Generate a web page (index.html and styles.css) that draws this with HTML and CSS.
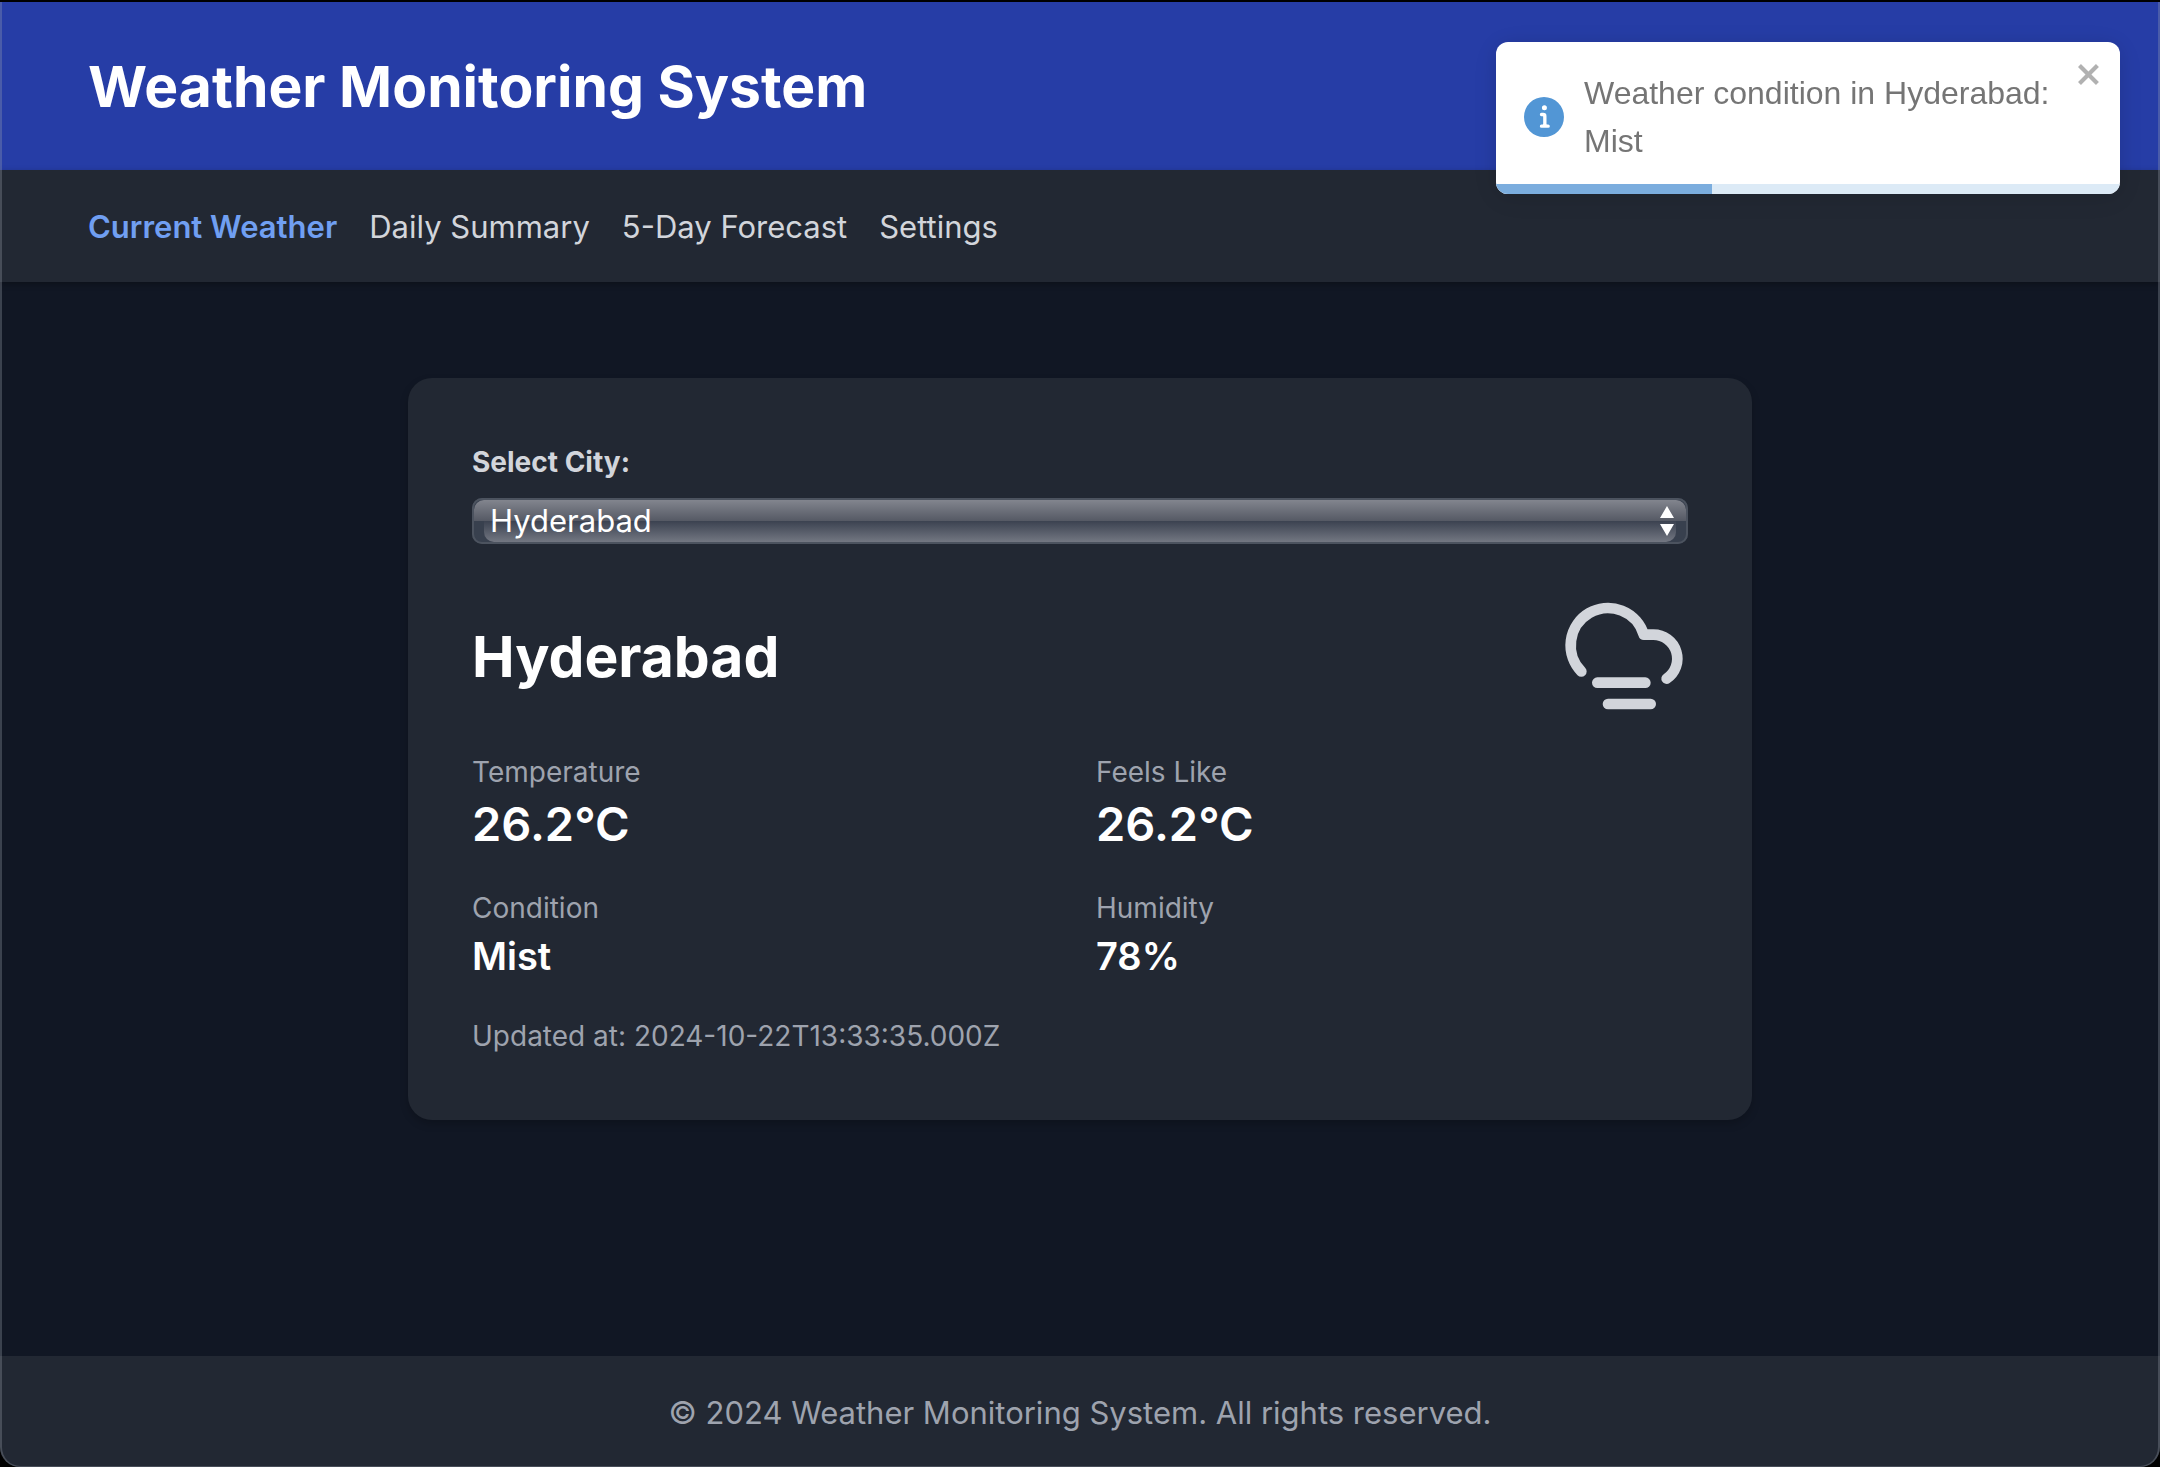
FILE: index.html
```html
<!DOCTYPE html>
<html lang="en">
<head>
<meta charset="utf-8">
<meta name="viewport" content="width=device-width, initial-scale=1">
<title>Weather Monitoring System</title>
<link rel="stylesheet" href="styles.css">
</head>
<body>
<div class="app">
  <header class="header">
    <h1 class="header-title">Weather Monitoring System</h1>
  </header>
  <nav class="nav">
    <a class="nav-link nav-link-active" href="#current">Current Weather</a>
    <a class="nav-link" href="#daily">Daily Summary</a>
    <a class="nav-link" href="#forecast">5-Day Forecast</a>
    <a class="nav-link" href="#settings">Settings</a>
  </nav>
  <main class="main">
    <section class="card">
      <label class="field-label" for="city">Select City:</label>
      <div class="select-wrap">
        <select class="select" id="city">
          <option>Hyderabad</option>
        </select>
        <svg class="select-arrows" viewBox="0 0 14 30" aria-hidden="true"><path d="M7 0l7 12H0zM0 18h14L7 30z"/></svg>
      </div>
      <div class="city">
        <h2 class="city-name">Hyderabad</h2>
        <svg class="city-icon" viewBox="0 0 24 24" aria-hidden="true">
          <path d="M4 14.899A7 7 0 1 1 15.71 8h1.79a4.5 4.5 0 0 1 2.5 8.242"/>
          <path d="M16 17H7"/>
          <path d="M17 21H9"/>
        </svg>
      </div>
      <div class="stats">
        <div>
          <p class="stat-label">Temperature</p>
          <p class="stat-value stat-value-large">26.2°C</p>
        </div>
        <div>
          <p class="stat-label">Feels Like</p>
          <p class="stat-value stat-value-large">26.2°C</p>
        </div>
        <div>
          <p class="stat-label">Condition</p>
          <p class="stat-value">Mist</p>
        </div>
        <div>
          <p class="stat-label">Humidity</p>
          <p class="stat-value">78%</p>
        </div>
      </div>
      <p class="updated">Updated at: 2024-10-22T13:33:35.000Z</p>
    </section>
  </main>
  <footer class="footer">© 2024 Weather Monitoring System. All rights reserved.</footer>
</div>
<div class="toast" role="alert">
  <div class="toast-body">
    <svg class="toast-icon" viewBox="0 0 24 24" aria-hidden="true"><path d="M12 0a12 12 0 1012 12A12.013 12.013 0 0012 0zm.25 5a1.5 1.5 0 11-1.5 1.5 1.5 1.5 0 011.5-1.5zm2.25 13.5h-4a1 1 0 010-2h.75a.25.25 0 00.25-.25v-4.5a.25.25 0 00-.25-.25h-.75a1 1 0 010-2h1a2 2 0 012 2v4.75a.25.25 0 00.25.25h.75a1 1 0 110 2z"/></svg>
    <div class="toast-text">Weather condition in Hyderabad: Mist</div>
  </div>
  <button class="toast-close" type="button" aria-label="close">
    <svg class="toast-close-icon" viewBox="0 0 14 16" aria-hidden="true"><path fill-rule="evenodd" d="M7.71 8.23l3.75 3.75-1.48 1.48-3.75-3.75-3.75 3.75L1 11.98l3.75-3.75L1 4.48 2.48 3l3.75 3.75L9.98 3l1.48 1.48-3.75 3.75z"/></svg>
  </button>
  <div class="toast-track"><div class="toast-progress" style="width: 34.6%"></div></div>
</div>
</body>
</html>
```
FILE: styles.css
```css
*, *::before, *::after { box-sizing: border-box; }

body, h1, h2, p { margin: 0; }

body {
  background: #111724;
  color: #fff;
  font-family: Inter, "Liberation Sans", sans-serif;
  font-size: 31px;
  line-height: 48px;
}

/* Window edge: thin light outline with rounded bottom corners */
body::after {
  content: "";
  position: fixed;
  inset: 2px 0 0;
  border: 2px solid rgba(160, 165, 175, 0.3);
  border-top: 0;
  border-bottom-width: 1px;
  border-radius: 0 0 20px 20px;
  box-shadow: 0 0 0 20px #000;
  pointer-events: none;
}

.app {
  display: flex;
  flex-direction: column;
  min-height: 100vh;
  padding-top: 2px;
}

.header {
  padding: 49px 88px 47px;
  background: #263da6;
}

.header-title {
  font-size: 57px;
  font-weight: 700;
  line-height: 72px;
}

.nav {
  display: flex;
  gap: 32px;
  padding: 33px 88px 31px;
  background: #222833;
  box-shadow: 0 2px 6px rgba(0, 0, 0, 0.3);
}

.nav-link {
  color: #d2d5db;
  text-decoration: none;
}

.nav-link-active {
  color: #709ff2;
  font-weight: 600;
}

.main {
  flex: 1;
  padding: 96px 32px;
}

.card {
  max-width: 1344px;
  margin: 0 auto;
  padding: 64px;
  border-radius: 24px;
  background: #222833;
  box-shadow: 0 4px 8px rgba(0, 0, 0, 0.2);
}

.field-label {
  display: block;
  margin-bottom: 16px;
  color: #d2d5db;
  font-size: 28px;
  font-weight: 700;
  line-height: 40px;
}

.select-wrap {
  position: relative;
  isolation: isolate;
  margin-bottom: 48px;
  border-radius: 10px;
  background: #38404e;
}

/* Glossy halves behind the transparent select */
.select-wrap::before,
.select-wrap::after {
  content: "";
  position: absolute;
  z-index: -1;
  height: 21px;
}

.select-wrap::before {
  top: 2px;
  right: 2px;
  left: 2px;
  border-radius: 10px 10px 0 0;
  background: linear-gradient(#82858e, #555964);
}

.select-wrap::after {
  right: 12px;
  bottom: 2px;
  left: 12px;
  border-radius: 0 0 10px 10px;
  background: linear-gradient(#3b4250, #737782);
}

.select {
  display: block;
  width: 100%;
  height: 46px;
  padding: 0 48px 0 16px;
  border: 2px solid #4c535f;
  border-radius: 10px;
  appearance: none;
  background: transparent;
  color: #fff;
  font: inherit;
  line-height: 42px;
}

.select-arrows {
  position: absolute;
  top: 8px;
  right: 14px;
  width: 14px;
  height: 30px;
  fill: #fff;
  pointer-events: none;
}

.city {
  display: flex;
  align-items: center;
  justify-content: space-between;
  margin-bottom: 32px;
}

.city-name {
  padding-top: 2px;
  font-size: 57px;
  font-weight: 700;
  line-height: 72px;
}

.city-icon {
  width: 128px;
  height: 128px;
  fill: none;
  stroke: #d2d5db;
  stroke-width: 2;
  stroke-linecap: round;
  stroke-linejoin: round;
}

.stats {
  display: grid;
  grid-template-columns: 1fr 1fr;
  gap: 32px;
  margin-bottom: 32px;
}

.stat-label, .updated {
  color: #9ea3ae;
  font-size: 28px;
  line-height: 40px;
}

.stat-value {
  font-size: 38px;
  font-weight: 600;
  line-height: 56px;
}

.stat-value-large {
  font-size: 47px;
  line-height: 64px;
}

.footer {
  padding: 33px 32px 30px;
  background: #222833;
  color: #9ea3ae;
  text-align: center;
}

.toast {
  position: fixed;
  top: 42px;
  right: 40px;
  display: flex;
  align-items: flex-start;
  width: 624px;
  padding: 16px;
  border-radius: 12px;
  overflow: hidden;
  background: #fff;
  box-shadow: 0 2px 20px rgba(0, 0, 0, 0.1), 0 4px 30px rgba(0, 0, 0, 0.05);
  color: #757575;
  font-family: "Liberation Sans", Arial, sans-serif;
  font-size: 32px;
}

.toast-body {
  flex: 1;
  display: flex;
  align-items: center;
  gap: 20px;
  padding: 11px 12px 13px;
}

.toast-icon {
  flex: none;
  width: 40px;
  height: 40px;
  fill: #5296d5;
}

.toast-text { flex: 1; }

.toast-close {
  padding: 0;
  border: 0;
  background: transparent;
  cursor: pointer;
  opacity: 0.3;
}

.toast-close-icon {
  display: block;
  width: 28px;
  height: 32px;
}

.toast-track {
  position: absolute;
  right: 0;
  bottom: 0;
  left: 0;
  height: 10px;
  background: #dceaf6;
}

.toast-progress {
  height: 100%;
  background: #7badde;
}
```
